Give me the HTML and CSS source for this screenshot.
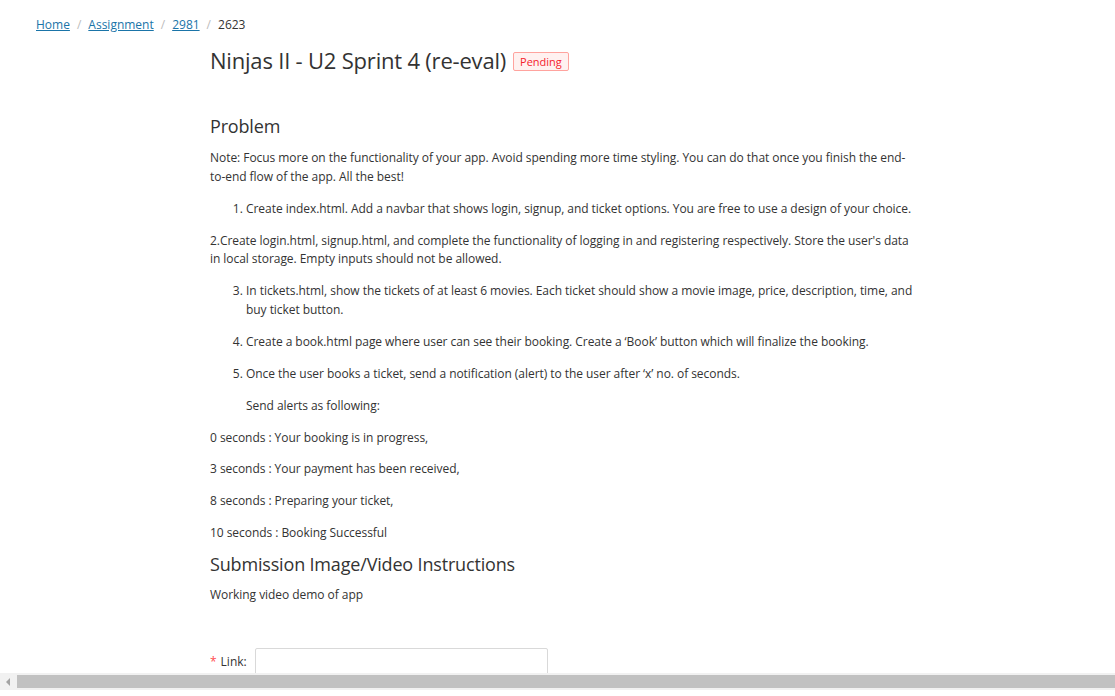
FILE: index.html
```html
<!DOCTYPE html>
<html lang="en">
<head>
<meta charset="utf-8">
<title>Ninjas II - U2 Sprint 4 (re-eval)</title>
<link rel="stylesheet" href="styles.css">
</head>
<body>
<div class="screen">
  <div class="page">
    <nav class="breadcrumb">
      <a href="#" class="crumb-link">Home</a><span class="sep">/</span>
      <a href="#" class="crumb-link">Assignment</a><span class="sep">/</span>
      <a href="#" class="crumb-link">2981</a><span class="sep">/</span>
      <span class="crumb-current">2623</span>
    </nav>
    <main class="main">
      <div class="title-row">
        <h1 class="title">Ninjas II - U2 Sprint 4 (re-eval)</h1>
        <span class="tag">Pending</span>
      </div>

      <h2 class="section-title problem-title">Problem</h2>
      <div class="problem">
        <p>Note: Focus more on the functionality of your app. Avoid spending more time styling. You can do that once you finish the end-to-end flow of the app. All the best!</p>
        <ol class="steps">
          <li><p>Create index.html. Add a navbar that shows login, signup, and ticket options. You are free to use a design of your choice.</p></li>
        </ol>
        <p>2.Create login.html, signup.html, and complete the functionality of logging in and registering respectively. Store the user's data in local storage. Empty inputs should not be allowed.</p>
        <ol class="steps" start="3">
          <li><p>In tickets.html, show the tickets of at least 6 movies. Each ticket should show a movie image, price, description, time, and buy ticket button.</p></li>
          <li><p>Create a book.html page where user can see their booking. Create a ‘Book’ button which will finalize the booking.</p></li>
          <li><p>Once the user books a ticket, send a notification (alert) to the user after ‘x’ no. of seconds.</p><p>Send alerts as following:</p></li>
        </ol>
        <p>0 seconds : Your booking is in progress,</p>
        <p>3 seconds : Your payment has been received,</p>
        <p>8 seconds : Preparing your ticket,</p>
        <p>10 seconds : Booking Successful</p>
      </div>

      <h2 class="section-title submission-title">Submission Image/Video Instructions</h2>
      <p class="plain">Working video demo of app</p>

      <form class="form-row">
        <label class="label" for="link"><span class="req">*</span>Link:</label>
        <input class="input" id="link" type="text">
      </form>
    </main>
  </div>
  <div class="hscroll">
    <span class="arrow-left"></span>
    <span class="thumb"></span>
  </div>
  <div class="bottom-gap"></div>
</div>
</body>
</html>
```
FILE: styles.css
```css
* { box-sizing: border-box; }
html, body { margin: 0; padding: 0; background: #fff; }
body {
  font-family: "Open Sans", "Noto Sans", "Liberation Sans", sans-serif;
  color: #333;
  font-size: 12px;
}
.screen {
  height: 696px;
  display: flex;
  flex-direction: column;
  overflow: hidden;
}
.page {
  flex: 1;
  overflow: hidden;
  min-height: 0;
}
.breadcrumb {
  padding: 15px 0 0 36px;
  font-size: 12px;
  line-height: 20px;
  display: flex;
  align-items: center;
}
.crumb-link { color: #1a74a8; text-decoration: underline; }
.sep { color: #bcbcbc; margin: 0 7px; }
.crumb-current { color: #333; }

.main {
  margin-left: 210px;
  width: 708px;
}
.title-row {
  display: flex;
  align-items: center;
  margin-top: 10px;
}
.title {
  margin: 0;
  font-size: 22px;
  font-weight: 400;
  line-height: 30px;
  letter-spacing: -0.2px;
  color: #333;
}
.tag {
  margin-left: 7px;
  margin-top: 3px;
  height: 19px;
  padding: 0 6px;
  line-height: 17px;
  font-size: 11px;
  color: #f5222d;
  background: #fff1f0;
  border: 1px solid #ffa39e;
  border-radius: 2px;
}
.section-title {
  margin: 0;
  font-size: 18px;
  font-weight: 400;
  line-height: 20px;
  letter-spacing: -0.17px;
  color: #333;
}
.problem-title { margin-top: 41px; }
.submission-title { margin-top: 0; line-height: 16px; }
.problem p, .plain {
  margin: 0 0 13px 0;
  line-height: 18.86px;
  letter-spacing: -0.05px;
}
.problem { margin-top: 13px; }
.steps {
  margin: 0;
  padding-left: 36px;
}
.steps li p { margin: 0 0 13px 0; }
.plain { margin-top: 14px; }

.form-row {
  margin-top: 43px;
  display: flex;
  align-items: center;
}
.label { font-size: 12px; color: #333; margin-right: 8px; }
.req { color: #ff4d4f; margin-right: 4px; }
.input {
  width: 293px;
  height: 27px;
  border: 1px solid #d9d9d9;
  border-radius: 2px;
  background: #fff;
  font: inherit;
}

.hscroll {
  height: 17px;
  background: #f1f1f1;
  display: flex;
  align-items: center;
  flex-shrink: 0;
}
.arrow-left {
  width: 0; height: 0;
  margin-left: 6px;
  border-top: 4px solid transparent;
  border-bottom: 4px solid transparent;
  border-right: 4px solid #a3a3a3;
}
.thumb {
  margin-left: 7px;
  flex: 1;
  height: 13px;
  background: #c1c1c1;
}
.bottom-gap { height: 6px; flex-shrink: 0; background: #fff; }
```
